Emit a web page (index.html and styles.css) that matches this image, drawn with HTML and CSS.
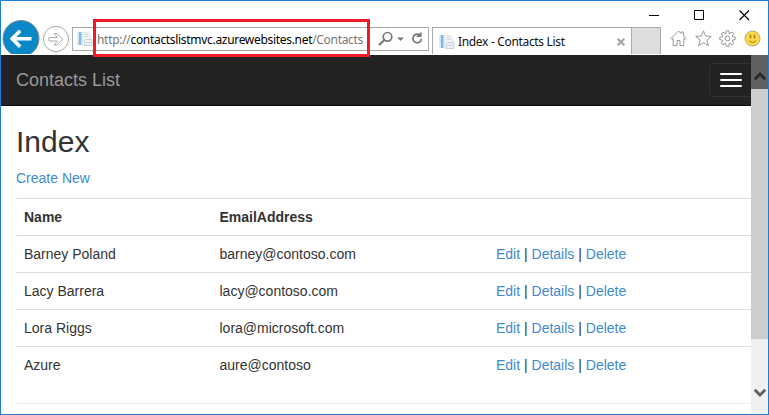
FILE: index.html
```html
<!DOCTYPE html>
<html lang="en">
<head>
<meta charset="utf-8">
<title>Index - Contacts List</title>
<link rel="stylesheet" href="styles.css">
</head>
<body>
<div class="window">
  <header class="chrome">
    <div class="titlebar">
      <svg width="11" height="11" viewBox="0 0 11 11"><path d="M0 5.500h10" stroke="#000"/></svg>
      <svg width="11" height="11" viewBox="0 0 11 11"><path d="M.5 .5h9v9h-9z" fill="none" stroke="#000"/></svg>
      <svg width="11" height="11" viewBox="0 0 11 11"><path d="M.5 .5l9.500 9.500M10 .5l-9.500 9.500" stroke="#000" stroke-width="1.100"/></svg>
    </div>
    <div class="toolbar">
      <svg class="back" width="38" height="34" viewBox="0 0 38 34"><circle cx="19" cy="18.500" r="18" fill="#0987c7" stroke="#858585" stroke-width=".9"/><path d="M29.500 18.800H11M18.200 10.800l-8 8 8 8" fill="none" stroke="#fff" stroke-width="3.600"/></svg>
      <svg class="forward" width="28" height="28" viewBox="0 0 28 28"><circle cx="14" cy="14" r="12.600" fill="#fff" stroke="#aaa"/><path d="M7 12.500h8.500l-3.500-4h3l5.700 5.700-5.700 5.800h-3l3.500-4H7z" fill="none" stroke="#aaa"/></svg>
      <div class="address">
        <svg class="favicon" width="16" height="16" viewBox="0 0 16 16"><path d="M1.500 1h3v13h-3z" fill="#7dbbe6"/><path d="M0 1h1.500v13H0z" fill="#e3edf5"/><path d="M5.500 1.500h6l2 2v10.500h-8z" fill="#f3f6f9" stroke="#dce5ec"/><path d="M7.500 3.500h4M7.500 5.500h4" stroke="#c6d5e0"/><path d="M8.500 8.500h6.500v6H7.500v-5z" fill="#eef2f5" stroke="#c5d2dc"/><path d="M9 11.500h5" stroke="#c6d3dc"/></svg>
        <span class="url">http://<b>contactslistmvc.azurewebsites.net</b>/Contacts</span>
        <svg class="tools" width="50" height="20" viewBox="0 0 50 20"><circle cx="10.500" cy="7.800" r="4.300" fill="none" stroke="#777" stroke-width="1.700"/><path d="M7.300 11l-5.300 5" stroke="#777" stroke-width="2.200"/><path d="M20 8.500h7l-3.500 3.500z" fill="#777"/><path d="M42.500 5.800a4.300 4.300 0 1 0 2 4" fill="none" stroke="#777" stroke-width="1.700"/><path d="M44.500 2.500v5.500H39z" fill="#777"/></svg>
      </div>
      <div class="tab">
        <svg class="favicon" width="16" height="16" viewBox="0 0 16 16"><path d="M1.500 1h3v13h-3z" fill="#7dbbe6"/><path d="M0 1h1.500v13H0z" fill="#e3edf5"/><path d="M5.500 1.500h6l2 2v10.500h-8z" fill="#f3f6f9" stroke="#dce5ec"/><path d="M7.500 3.500h4M7.500 5.500h4" stroke="#c6d5e0"/><path d="M8.500 8.500h6.500v6H7.500v-5z" fill="#eef2f5" stroke="#c5d2dc"/><path d="M9 11.500h5" stroke="#c6d3dc"/></svg>
        <span class="tab-title">Index - Contacts List</span>
        <svg class="close" width="8" height="8" viewBox="0 0 8 8"><path d="M.7 .7l6.600 6.600M7.300 .7L.7 7.300" stroke="#a3a3a3" stroke-width="2"/></svg>
      </div>
      <div class="new-tab"></div>
      <div class="commands">
        <svg width="17" height="17" viewBox="0 0 17 17"><path d="M1 8.500L8.500 1l2.500 2.500V2h2.500v4L16 8.500l-1 1-1.200-1V15.500H10v-5H7v5H3.200v-7L2 9.500z" fill="#fff" stroke="#999"/></svg>
        <svg width="17" height="17" viewBox="0 0 17 17"><path d="M8.500 .8l2.100 5.300 5.700.3-4.400 3.600 1.500 5.700-4.900-3.100-4.900 3.100 1.500-5.700L.7 6.400l5.700-.3z" fill="#fff" stroke="#999"/></svg>
        <svg width="17" height="17" viewBox="0 0 17 17"><path d="M7 3.200L7.200.8h2.600L10 3.200l1 .4 2-1.500 1.800 1.800-1.500 2 .4 1 2.500.2v2.600l-2.500.3-.4 1 1.500 2-1.800 1.800-2-1.500-1 .4-.2 2.500H7.200L7 13.700l-1-.4-2 1.500L2.200 13l1.500-2-.4-1-2.500-.3V7.100l2.500-.2.4-1-1.500-2L4 2.100l2 1.500z" fill="#fff" stroke="#999"/><circle cx="8.500" cy="8.500" r="2.400" fill="#fff" stroke="#999"/></svg>
        <svg width="17" height="17" viewBox="0 0 17 17"><circle cx="8.500" cy="8.500" r="7.500" fill="#ffda45" stroke="#b0a786"/><path d="M6.500 4.500v4M10.500 4.500v4" stroke="#9a8128" stroke-width="1.500"/><path d="M4.700 10.500q3.800 4 7.600 0" fill="none" stroke="#9a8128"/></svg>
      </div>
    </div>
    <div class="highlight"></div>
  </header>
  <div class="viewport">
    <main class="page">
      <nav class="navbar">
        <a class="brand">Contacts List</a>
        <button class="toggle" aria-label="Menu"><i></i><i></i><i></i></button>
      </nav>
      <section class="content">
        <h2>Index</h2>
        <p><a>Create New</a></p>
        <table>
          <colgroup><col class="name"><col class="email"><col></colgroup>
          <tr><th>Name</th><th>EmailAddress</th><th></th></tr>
          <tr><td>Barney Poland</td><td>barney@contoso.com</td><td><a>Edit</a> | <a>Details</a> | <a>Delete</a></td></tr>
          <tr><td>Lacy Barrera</td><td>lacy@contoso.com</td><td><a>Edit</a> | <a>Details</a> | <a>Delete</a></td></tr>
          <tr><td>Lora Riggs</td><td>lora@microsoft.com</td><td><a>Edit</a> | <a>Details</a> | <a>Delete</a></td></tr>
          <tr><td>Azure</td><td>aure@contoso</td><td><a>Edit</a> | <a>Details</a> | <a>Delete</a></td></tr>
        </table>
        <hr>
      </section>
    </main>
    <aside class="scrollbar">
      <div class="up"><svg width="12" height="10" viewBox="0 0 12 10"><path d="M.8 8.200L6 3l5.200 5.200" fill="none" stroke="#282828" stroke-width="3"/></svg></div>
      <div class="thumb"></div>
      <div class="down"><svg width="12" height="10" viewBox="0 0 12 10"><path d="M.8 1.800L6 7l5.200-5.200" fill="none" stroke="#606060" stroke-width="2.800"/></svg></div>
    </aside>
  </div>
</div>
</body>
</html>
```
FILE: styles.css
```css
* { box-sizing: border-box; }
body { margin: 0; font: 14px/20px "Liberation Sans", Arial, sans-serif; color: #333; }
svg { display: block; flex: none; }
.window { width: 769px; height: 415px; border: 1px solid #1a80d5; background: #fff; display: flex; flex-direction: column; overflow: hidden; }

.chrome { position: relative; height: 54px; flex: none; font: 12px/16px "Noto Sans", sans-serif; }
.titlebar { height: 26px; display: flex; justify-content: flex-end; gap: 34px; padding: 9px 18px 0 0; }
.toolbar { height: 27px; display: flex; align-items: flex-start; }
.back { margin: -7px 0 0 1px; }
.forward { margin: -2px 0 0 2px; }
.address { width: 357px; height: 24px; margin-left: 2px; border: 1px solid #aaa; display: flex; align-items: center; padding-left: 4px; }
.url { width: 270px; margin-left: 4px; padding-top: 1px; color: #777; white-space: nowrap; font-size: 12px; letter-spacing: -.31px; }
.url b { font-weight: 400; color: #000; }
.tools { margin-left: 10px; }
.tab { width: 200px; height: 27px; margin-left: 3px; border: solid #aaa; border-width: 1px 1px 0; display: flex; align-items: center; padding: 1px 6px 0; color: #111; }
.tab-title { flex: 1; margin-left: 3px; white-space: nowrap; font-size: 12px; letter-spacing: -.33px; }
.new-tab { width: 29px; height: 27px; background: #ddd; border: solid #aaa; border-width: 1px 1px 0 0; }
.commands { display: flex; gap: 7.500px; margin: 3px 0 0 9px; }
.highlight { position: absolute; z-index: 2; left: 92px; top: 18px; width: 277px; height: 38px; border: 3px solid #ed1c24; }

.viewport { flex: 1; display: flex; min-height: 0; }
.page { flex: 1; min-width: 0; overflow: hidden; }
.navbar { height: 51px; width: 752px; background: #222; border-bottom: 1px solid #080808; display: flex; justify-content: space-between; align-items: flex-start; padding: 0 0 0 15px; }
.brand { font-size: 18px; line-height: 20px; padding-top: 15px; }
.toggle { width: 44px; height: 34px; margin-top: 8px; padding: 0 10px; background: none; border: 1px solid #333; border-radius: 4px; display: flex; flex-direction: column; justify-content: center; gap: 4px; }
.toggle i { width: 22px; height: 2px; border-radius: 1px; background: #fff; }
.content { padding: 0 0 0 15px; margin-top: -1px; display: flow-root; }
h2 { font-size: 30px; line-height: 33px; font-weight: 500; margin: 20px 0 10px; }
p { margin: 0 0 10px; }
a { color: #428bca; }
a.brand { color: #999; }
table { width: 100%; table-layout: fixed; border-collapse: collapse; margin-bottom: 19px; }
.name { width: 195.500px; }
.email { width: 276.500px; }
th, td { height: 37px; padding: 8px; border-top: 1px solid #ddd; text-align: left; line-height: 20px; }
hr { margin: 19px 0; border: 0; border-top: 1px solid #eee; }

.scrollbar { width: 17px; flex: none; background: #f0f0f0; display: flex; flex-direction: column; }
.up { height: 34px; background: #606060; display: flex; justify-content: center; padding-top: 16px; }
.thumb { height: 250px; background: #cdcdcd; }
.down { flex: 1; display: flex; justify-content: center; padding-top: 49px; }
```
